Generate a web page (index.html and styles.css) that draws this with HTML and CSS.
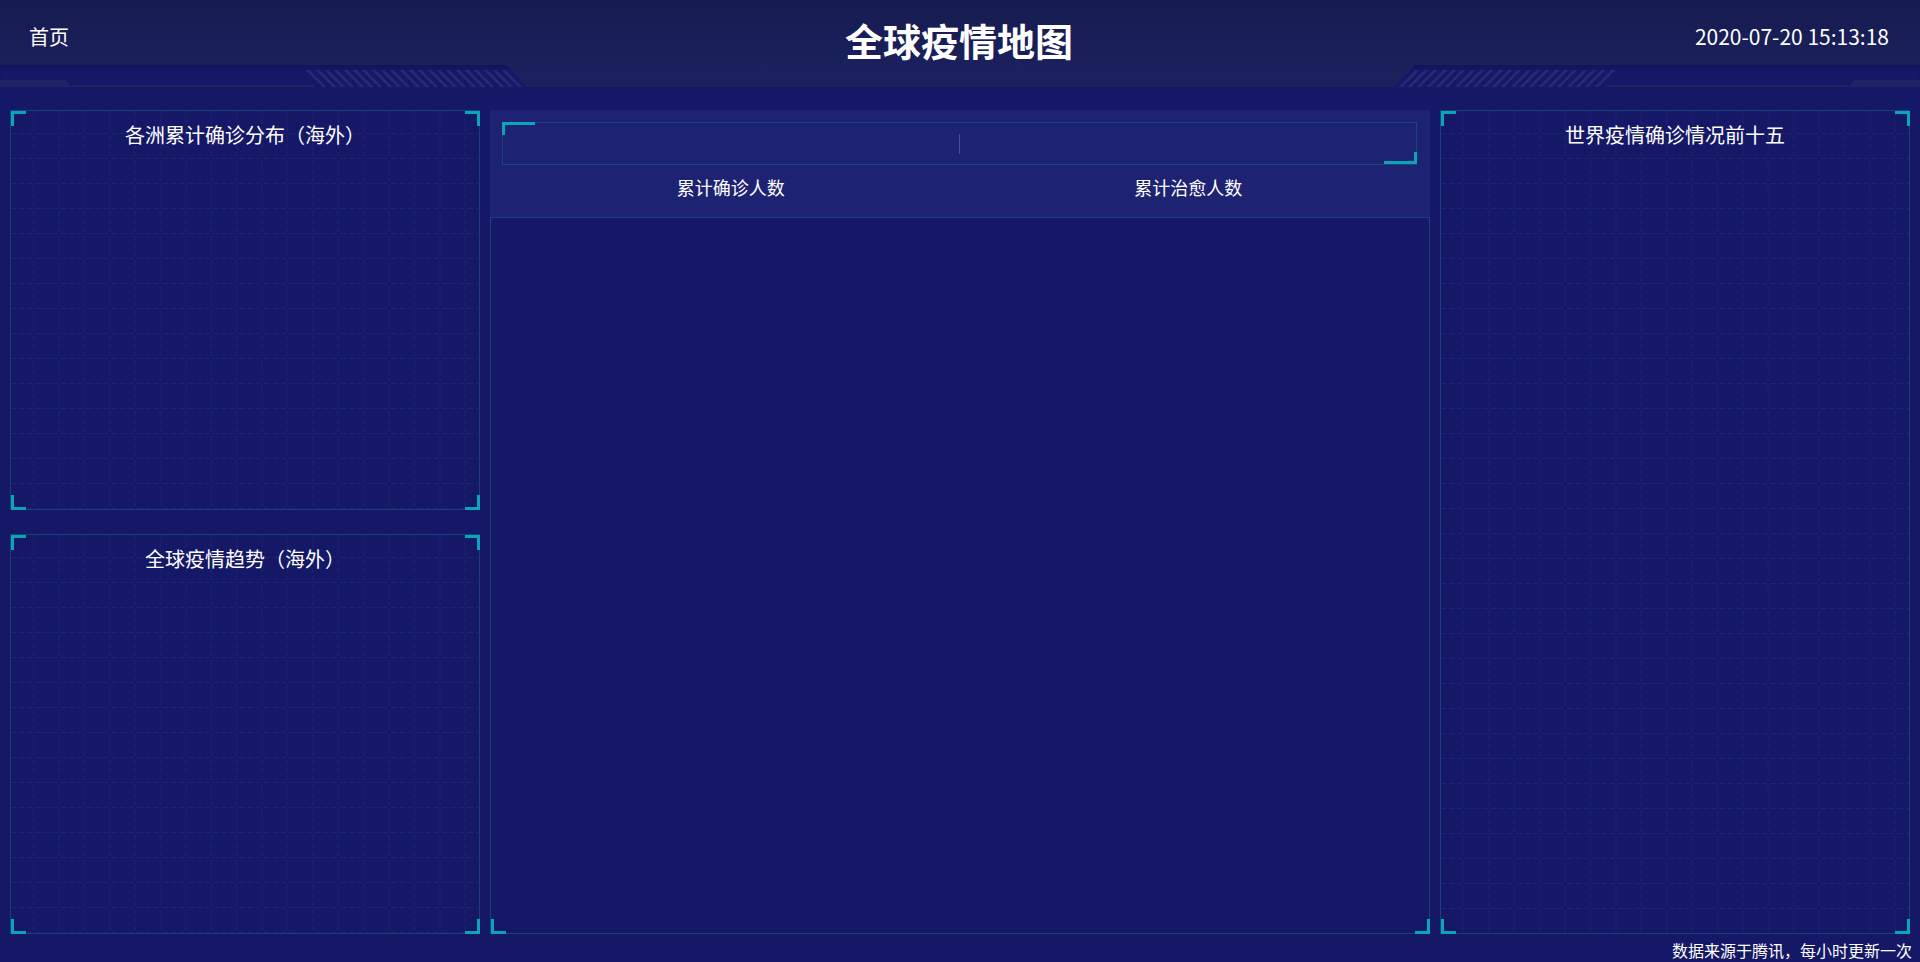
FILE: index.html
```html
<!DOCTYPE html>
<html lang="zh-CN">
<head>
	<meta charset="UTF-8">
	<title>全球疫情地图</title>
	<link rel="stylesheet" href="styles.css">
</head>
<body>
	<svg class="defs" width="0" height="0">
		<defs>
			<pattern id="grid" width="25.4" height="25" patternUnits="userSpaceOnUse">
				<path d="M22.5 0V25M0 22.5H25.4" stroke="#1d2474" stroke-width="1" stroke-dasharray="5 3" fill="none"/>
			</pattern>
		</defs>
	</svg>

	<div class="header">
		<a class="home" href="#">首页</a>
		<h1 class="title">全球疫情地图</h1>
		<span class="time">2020-07-20 15:13:18</span>
	</div>
	<div class="band">
		<i class="tab tab-l"></i>
		<i class="line line-l"></i>
		<i class="hatch hatch-l"></i>
		<i class="hatch hatch-r"></i>
		<i class="trap"></i>
		<i class="line line-r"></i>
		<i class="tab tab-r"></i>
	</div>

	<div class="board">
		<div class="col">
			<div class="panel">
				<svg class="grid"><rect width="100%" height="100%" fill="url(#grid)"/></svg>
				<h3 class="panel-title">各洲累计确诊分布（海外）</h3>
				<i class="corner tl"></i><i class="corner tr"></i><i class="corner bl"></i><i class="corner br"></i>
			</div>
			<div class="panel">
				<svg class="grid"><rect width="100%" height="100%" fill="url(#grid)"/></svg>
				<h3 class="panel-title">全球疫情趋势（海外）</h3>
				<i class="corner tl"></i><i class="corner tr"></i><i class="corner bl"></i><i class="corner br"></i>
			</div>
		</div>

		<div class="mid">
			<div class="stats">
				<div class="nums">
					<div class="num"></div>
					<i class="split"></i>
					<div class="num"></div>
					<i class="mark mark-tl"></i>
					<i class="mark mark-br"></i>
				</div>
				<div class="labels">
					<span>累计确诊人数</span>
					<span>累计治愈人数</span>
				</div>
			</div>
			<div class="map">
				<i class="corner bl"></i><i class="corner br"></i>
			</div>
		</div>

		<div class="col">
			<div class="panel">
				<svg class="grid"><rect width="100%" height="100%" fill="url(#grid)"/></svg>
				<h3 class="panel-title">世界疫情确诊情况前十五</h3>
				<i class="corner tl"></i><i class="corner tr"></i><i class="corner bl"></i><i class="corner br"></i>
			</div>
		</div>
	</div>

	<div class="foot">数据来源于腾讯，每小时更新一次</div>
</body>
</html>
```

FILE: styles.css
```css
*{
	margin: 0;
	padding: 0;
	box-sizing: border-box;
}
body{
	background: #141866;
	color: #fff;
	font-family: "Noto Sans CJK SC", "Liberation Sans", sans-serif;
	overflow: hidden;
}
.defs{
	position: absolute;
}

/* 头部 */
.header{
	height: 65px;
	display: flex;
	align-items: center;
	padding: 0 31px 0 29px;
	background: linear-gradient(#161b50, #1a205b);
}
.home{
	flex: 1;
	color: #fff;
	text-decoration: none;
	font-size: 20px;
	line-height: 1;
	margin-top: 9px;
}
.title{
	font-size: 38px;
	font-weight: bold;
	line-height: 1;
	margin-top: 15px;
}
.time{
	flex: 1;
	text-align: right;
	font-size: 21px;
	line-height: 1;
	margin-top: 8px;
}

/* 头部下方装饰条 */
.band{
	position: relative;
	height: 22px;
	background: #151868;
	box-shadow: inset 0 3px 3px rgba(0,0,0,0.15);
}
.band i{
	position: absolute;
	display: block;
}
.tab{
	top: 15px;
	bottom: 0;
	width: 71px;
	background: #1d2363;
}
.tab-l{
	left: 0;
	clip-path: polygon(0 0, 66px 0, 100% 100%, 0 100%);
}
.tab-r{
	right: 0;
	clip-path: polygon(5px 0, 100% 0, 100% 100%, 0 100%);
}
.line{
	bottom: 0;
	height: 2px;
	width: 245px;
	background: #1d2363;
}
.line-l{
	left: 69px;
}
.line-r{
	left: 1606px;
}
.hatch{
	top: 5px;
	bottom: 0;
	width: 223px;
}
.hatch-l{
	left: 304px;
	background: repeating-linear-gradient(45deg, #242a72 0 3px, transparent 3px 6.6px);
	clip-path: polygon(0 0, 100% 0, 100% 100%, 18px 100%);
}
.hatch-r{
	left: 1394px;
	background: repeating-linear-gradient(-45deg, #242a72 0 3px, transparent 3px 6.6px);
	clip-path: polygon(0 0, 100% 0, calc(100% - 18px) 100%, 0 100%);
}
.trap{
	left: 506px;
	width: 909px;
	top: 0;
	bottom: 0;
	background: #1b215c;
	clip-path: polygon(0 0, 100% 0, calc(100% - 21px) 100%, 21px 100%);
}

/* 主体 */
.board{
	display: grid;
	grid-template-columns: 470px 940px 470px;
	column-gap: 10px;
	padding: 23px 10px 0;
	height: 847px;
}
.col{
	display: flex;
	flex-direction: column;
	gap: 24px;
}
.panel{
	position: relative;
	flex: 1;
	border: 1px solid #16417a;
}
.grid{
	position: absolute;
	top: 0;
	left: 0;
	width: 100%;
	height: 100%;
}
.panel-title{
	position: relative;
	text-align: center;
	font-size: 20px;
	font-weight: normal;
	line-height: 28px;
	margin-top: 10px;
}

/* 四角 */
.corner{
	position: absolute;
	width: 15px;
	height: 15px;
	border: 0 solid #0aa5b7;
}
.tl{
	top: 0;
	left: 0;
	border-top-width: 3px;
	border-left-width: 3px;
}
.tr{
	top: 0;
	right: -1px;
	border-top-width: 3px;
	border-right-width: 3px;
}
.bl{
	bottom: -1px;
	left: 0;
	border-bottom-width: 3px;
	border-left-width: 3px;
}
.br{
	bottom: -1px;
	right: -1px;
	border-bottom-width: 3px;
	border-right-width: 3px;
}

/* 中间数字区 */
.mid{
	display: flex;
	flex-direction: column;
}
.stats{
	height: 107px;
	background: #1e2273;
	padding: 12px 13px 0 12px;
}
.nums{
	position: relative;
	height: 43px;
	border: 1px solid #194677;
	display: flex;
	align-items: center;
}
.num{
	flex: 1;
}
.split{
	width: 1px;
	height: 20px;
	background: #4a528c;
}
.mark{
	position: absolute;
	width: 33px;
	border: 0 solid #0aa5b7;
}
.mark-tl{
	top: -1px;
	left: -1px;
	height: 13px;
	border-top-width: 3px;
	border-left-width: 3px;
}
.mark-br{
	bottom: 0;
	right: -1px;
	height: 12px;
	border-bottom-width: 3px;
	border-right-width: 3px;
}
.labels{
	display: flex;
	margin-top: 10px;
	font-size: 18px;
	line-height: 24px;
}
.labels span{
	flex: 1;
	text-align: center;
}
.map{
	position: relative;
	flex: 1;
	border: 1px solid #16417a;
}

.foot{
	text-align: right;
	padding-right: 8px;
	margin-top: 6px;
	font-size: 16px;
	line-height: 20px;
}
```
